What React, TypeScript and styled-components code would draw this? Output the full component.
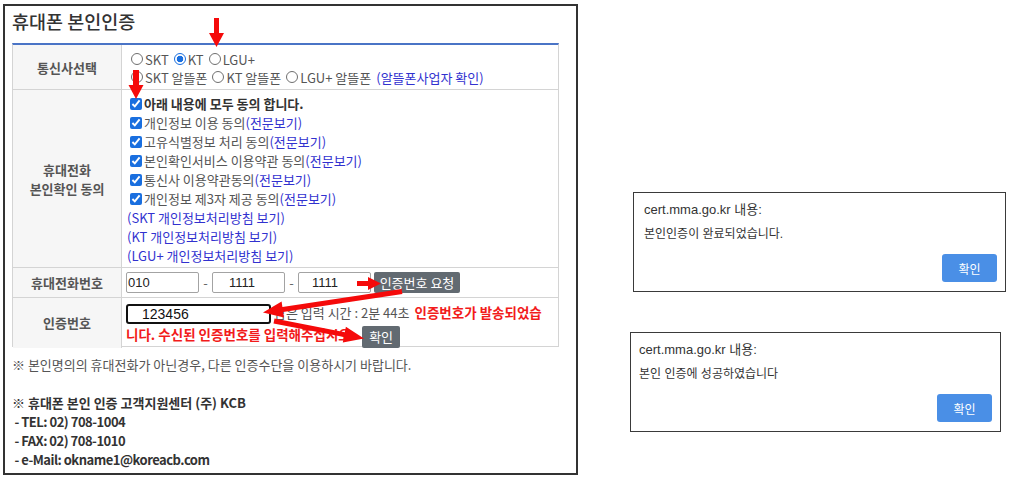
import React from "react";
import styled, { createGlobalStyle } from "styled-components";

const GlobalStyle = createGlobalStyle`
  html, body {
    margin: 0;
    padding: 0;
    background: #ffffff;
  }
  body {
    font-family: "Noto Sans CJK KR", sans-serif;
  }
`;

type ArrowSpec = { x1: number; y1: number; x2: number; y2: number; w: number; hl: number; hw: number };

// red callout arrows drawn over the screenshot
const arrows: ArrowSpec[] = [
  { x1: 216.5, y1: 18, x2: 216.5, y2: 47, w: 5, hl: 14, hw: 15 },
  { x1: 136, y1: 70, x2: 136, y2: 99, w: 6, hl: 14, hw: 15 },
  { x1: 357, y1: 283.5, x2: 381, y2: 283.5, w: 5, hl: 13, hw: 13 },
  { x1: 402, y1: 291.5, x2: 263, y2: 312.5, w: 5, hl: 20, hw: 16 },
  { x1: 274, y1: 321, x2: 364, y2: 338.5, w: 5, hl: 20, hw: 16 },
];

const arrowPoints = ({ x1, y1, x2, y2, w, hl, hw }: ArrowSpec) => {
  const len = Math.hypot(x2 - x1, y2 - y1);
  const ux = (x2 - x1) / len;
  const uy = (y2 - y1) / len;
  const px = -uy;
  const py = ux;
  const bx = x2 - ux * hl;
  const by = y2 - uy * hl;
  const pts = [
    [x1 + (px * w) / 2, y1 + (py * w) / 2],
    [bx + (px * w) / 2, by + (py * w) / 2],
    [bx + (px * hw) / 2, by + (py * hw) / 2],
    [x2, y2],
    [bx - (px * hw) / 2, by - (py * hw) / 2],
    [bx - (px * w) / 2, by - (py * w) / 2],
    [x1 - (px * w) / 2, y1 - (py * w) / 2],
  ];
  return pts.map((p) => p.map((n) => n.toFixed(1)).join(",")).join(" ");
};

const agreements = [
  { text: "개인정보 이용 동의" },
  { text: "고유식별정보 처리 동의" },
  { text: "본인확인서비스 이용약관 동의" },
  { text: "통신사 이용약관동의" },
  { text: "개인정보 제3자 제공 동의" },
];

const policies = ["(SKT 개인정보처리방침 보기)", "(KT 개인정보처리방침 보기)", "(LGU+ 개인정보처리방침 보기)"];

const contacts = [" - TEL: 02) 708-1004", " - FAX: 02) 708-1010", " - e-Mail: okname1@koreacb.com"];

const App = () => {
  return (
    <Canvas>
      <GlobalStyle />
      <Panel>
        <Title>휴대폰 본인인증</Title>
        <FormTable>
          <Row $h={45}>
            <Label>통신사선택</Label>
            <Cell $pt={5}>
              <OptionLine>
                <Option><Radio type="radio" name="tel" />SKT</Option>
                <Option><Radio type="radio" name="tel" defaultChecked />KT</Option>
                <Option><Radio type="radio" name="tel" />LGU+</Option>
              </OptionLine>
              <OptionLine>
                <Option><Radio type="radio" name="tel" />SKT 알뜰폰</Option>
                <Option><Radio type="radio" name="tel" />KT 알뜰폰</Option>
                <Option><Radio type="radio" name="tel" />LGU+ 알뜰폰</Option>
                <Link>(알뜰폰사업자 확인)</Link>
              </OptionLine>
            </Cell>
          </Row>
          <Row $h={178}>
            <Label>
              휴대전화
              <br />
              본인확인 동의
            </Label>
            <Cell $pt={4}>
              <CheckLine $strong>
                <Check type="checkbox" defaultChecked />
                아래 내용에 모두 동의 합니다.
              </CheckLine>
              {agreements.map((a) => (
                <CheckLine key={a.text}>
                  <Check type="checkbox" defaultChecked />
                  {a.text}
                  <Link>(전문보기)</Link>
                </CheckLine>
              ))}
              {policies.map((p) => (
                <PolicyLine key={p}>
                  <Link>{p}</Link>
                </PolicyLine>
              ))}
            </Cell>
          </Row>
          <Row $h={30}>
            <Label>휴대전화번호</Label>
            <PhoneCell>
              <PhoneInput defaultValue="010" $pl={1} />
              <Dash>-</Dash>
              <PhoneInput defaultValue="1111" $pl={16} />
              <Dash>-</Dash>
              <PhoneInput defaultValue="1111" $pl={13} />
              <GrayButton $w={86} $h={21}>인증번호 요청</GrayButton>
            </PhoneCell>
          </Row>
          <Row $h={49}>
            <Label>인증번호</Label>
            <CodeCell>
              <CodeInput defaultValue="123456" />
              <TimeText>남은 입력 시간 : 2분 44초</TimeText>
              <Alert>인증번호가 발송되었습니다. 수신된 인증번호를 입력해주십시오.</Alert>
              <GrayButton $w={38} $h={22}>확인</GrayButton>
            </CodeCell>
          </Row>
        </FormTable>
        <Notice>※ 본인명의의 휴대전화가 아닌경우, 다른 인증수단을 이용하시기 바랍니다.</Notice>
        <Support>
          <div>※ 휴대폰 본인 인증 고객지원센터 (주) KCB</div>
          {contacts.map((c) => (
            <ContactLine key={c}>{c}</ContactLine>
          ))}
        </Support>
      </Panel>

      <Dialog $left={633} $top={192} $w={373} $pl={10}>
        <DialogTitle>cert.mma.go.kr 내용:</DialogTitle>
        <DialogText>본인인증이 완료되었습니다.</DialogText>
        <DialogFooter>
          <BlueButton>확인</BlueButton>
        </DialogFooter>
      </Dialog>
      <Dialog $left={630} $top={332} $w={371} $pl={8}>
        <DialogTitle>cert.mma.go.kr 내용:</DialogTitle>
        <DialogText>본인 인증에 성공하였습니다</DialogText>
        <DialogFooter>
          <BlueButton>확인</BlueButton>
        </DialogFooter>
      </Dialog>

      <Overlay viewBox="0 0 1013 481">
        {arrows.map((a, i) => (
          <polygon key={i} points={arrowPoints(a)} fill="#f50a0a" />
        ))}
      </Overlay>
    </Canvas>
  );
};

export default App;

const Canvas = styled.div`
  position: relative;
  width: 1013px;
  height: 481px;
  overflow: hidden;
  box-sizing: border-box;
  padding: 4px 0 0 3px;
`;

const Panel = styled.section`
  width: 575px;
  height: 471px;
  box-sizing: border-box;
  border: 2px solid #333;
  padding: 0 17px 0 7px;
  color: #555;
  font-size: 13px;
`;

const Title = styled.h1`
  margin: 0;
  height: 37px;
  box-sizing: border-box;
  padding-top: 3px;
  font-size: 18.5px;
  line-height: 24px;
  font-weight: 500;
  color: #333;
`;

const FormTable = styled.div`
  border-top: 2px solid #4a74c6;
  border-left: 1px solid #d4d4d4;
  border-right: 1px solid #d4d4d4;
`;

const Row = styled.div<{ $h: number }>`
  display: grid;
  grid-template-columns: 109px 1fr;
  height: ${(p) => p.$h}px;
  box-sizing: border-box;
  border-bottom: 1px solid #d4d4d4;
`;

const Label = styled.div`
  display: flex;
  align-items: center;
  justify-content: center;
  text-align: center;
  background: #f6f6f6;
  border-right: 1px solid #d4d4d4;
  font-weight: 700;
  line-height: 19px;
  color: #555;
`;

const Cell = styled.div<{ $pt: number }>`
  padding: ${(p) => p.$pt}px 0 0 4px;
`;

const OptionLine = styled.div`
  display: flex;
  align-items: center;
  height: 18px;
  padding-left: 5px;
  white-space: nowrap;
`;

const Option = styled.label`
  display: inline-flex;
  align-items: center;
  margin-right: 5px;
`;

const Radio = styled.input`
  appearance: none;
  width: 12px;
  height: 12px;
  margin: 0 2px 0 0;
  box-sizing: border-box;
  border: 1px solid #6f6f6f;
  border-radius: 50%;
  background: #fff;
  &:checked {
    border-color: #1a6fdf;
    background: radial-gradient(circle, #1a6fdf 0 3px, #ffffff 3.6px);
  }
`;

const Link = styled.span`
  color: #3131cf;
`;

const CheckLine = styled.div<{ $strong?: boolean }>`
  display: flex;
  align-items: center;
  height: 19px;
  white-space: nowrap;
  font-weight: ${(p) => (p.$strong ? 700 : 400)};
  color: ${(p) => (p.$strong ? "#333" : "#555")};
`;

const Check = styled.input`
  width: 12px;
  height: 12px;
  margin: 0 2px 0 4px;
  accent-color: #1a6fdf;
`;

const PolicyLine = styled.div`
  height: 19px;
  line-height: 19px;
  padding-left: 1px;
  white-space: nowrap;
`;

const PhoneCell = styled.div`
  display: flex;
  align-items: center;
  padding-left: 4px;
`;

const PhoneInput = styled.input<{ $pl: number }>`
  width: 73px;
  height: 21px;
  box-sizing: border-box;
  border: 1px solid #a3a3a3;
  border-radius: 2px;
  padding: 0 0 0 ${(p) => p.$pl}px;
  font-family: "Liberation Sans", sans-serif;
  font-size: 13px;
  color: #222;
  outline: none;
`;

const Dash = styled.span`
  width: 5px;
  margin: 0 4px;
  text-align: center;
  color: #666;
`;

const GrayButton = styled.button<{ $w: number; $h: number }>`
  width: ${(p) => p.$w}px;
  height: ${(p) => p.$h}px;
  margin-left: 3px;
  padding: 0;
  border: none;
  border-radius: 2px;
  background: #626a71;
  color: #ffffff;
  font-family: "Noto Sans CJK KR", sans-serif;
  font-size: 13px;
  line-height: ${(p) => p.$h}px;
  vertical-align: middle;
`;

const CodeCell = styled.div`
  padding: 4px 4px 0 4px;
  line-height: 20px;
`;

const CodeInput = styled.input`
  display: inline-block;
  width: 145px;
  height: 20px;
  box-sizing: border-box;
  border: 2px solid #111;
  border-radius: 3px;
  padding: 0 0 0 14px;
  margin: 0 3px 0 0;
  vertical-align: middle;
  font-family: "Liberation Sans", sans-serif;
  font-size: 14px;
  color: #111;
  outline: none;
`;

const TimeText = styled.span`
  color: #555;
  margin-right: 5px;
`;

const Alert = styled.span`
  color: #f21b1b;
  font-weight: 700;
  font-size: 13.5px;
  margin-right: 4px;
`;

const Notice = styled.p`
  margin: 8px 0 0;
  line-height: 19px;
  color: #555;
`;

const Support = styled.div`
  margin-top: 19px;
  line-height: 19px;
  font-weight: 700;
  color: #333;
`;

const ContactLine = styled.div`
  white-space: pre;
  letter-spacing: -0.5px;
`;

const Dialog = styled.div<{ $left: number; $top: number; $w: number; $pl: number }>`
  position: absolute;
  left: ${(p) => p.$left}px;
  top: ${(p) => p.$top}px;
  width: ${(p) => p.$w}px;
  height: 100px;
  box-sizing: border-box;
  border: 1px solid #3a3a3a;
  background: #ffffff;
  padding: 8px 8px 9px ${(p) => p.$pl}px;
  display: flex;
  flex-direction: column;
  font-family: "Liberation Sans", "Noto Sans CJK KR", sans-serif;
  color: #333;
`;

const DialogTitle = styled.div`
  font-size: 13px;
  line-height: 18px;
`;

const DialogText = styled.div`
  margin-top: 7px;
  font-size: 12px;
  line-height: 16px;
`;

const DialogFooter = styled.div`
  margin-top: auto;
  display: flex;
  justify-content: flex-end;
`;

const BlueButton = styled.button`
  width: 55px;
  height: 28px;
  border: none;
  border-radius: 3px;
  background: #4a8fe6;
  color: #ffffff;
  font-family: "Noto Sans CJK KR", sans-serif;
  font-size: 12px;
  padding: 0;
`;

const Overlay = styled.svg`
  position: absolute;
  left: 0;
  top: 0;
  width: 1013px;
  height: 481px;
  pointer-events: none;
`;
